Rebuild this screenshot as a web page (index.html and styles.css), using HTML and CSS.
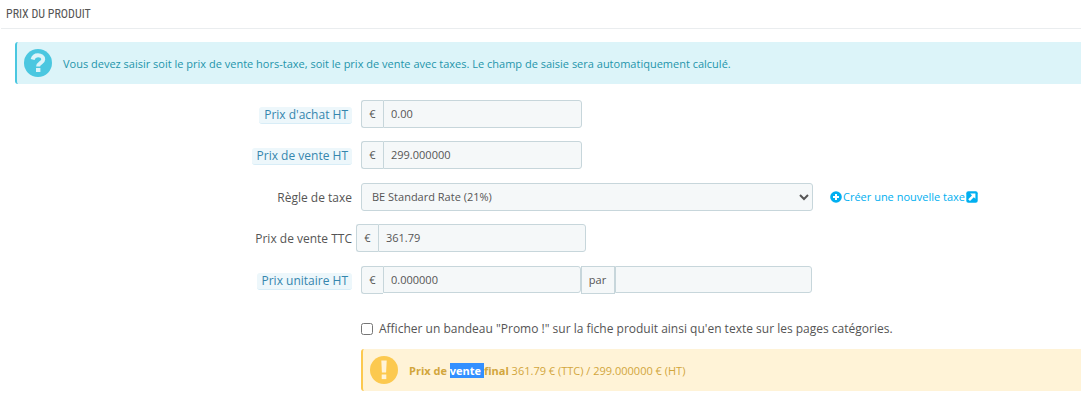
FILE: index.html
```
<!DOCTYPE html>
<html lang="fr">

<head>
    <meta charset="utf-8">
    <title>Prix du produit</title>
    <link rel="stylesheet" href="styles.css">
</head>

<body>
    <div class="panel">
        <h3 class="panel-heading">PRIX DU PRODUIT</h3>

        <div class="panel-body">
            <div class="alert alert-info">
                <svg class="alert-icon" viewBox="0 0 28 28" aria-hidden="true">
                    <circle cx="14" cy="14" r="14" fill="#4ac7e0" />
                    <path d="M8.6 10.4C9.4 7.4 11.3 6.3 14 6.3c3 0 5.2 1.6 5.2 4.1 0 3.6-5.1 3.5-5.1 7.2" fill="none" stroke="#dcf4f9" stroke-width="4" />
                    <rect x="12" y="19" width="4.4" height="4" fill="#dcf4f9" />
                </svg>
                <p>Vous devez saisir soit le prix de vente hors-taxe, soit le prix de vente avec taxes. Le champ de saisie sera automatiquement calculé.</p>
            </div>

            <div class="form-group">
                <label for="wholesalePrice"><span class="label-tooltip">Prix d'achat HT</span></label>
                <div class="input-group">
                    <span class="addon">€</span>
                    <input type="text" id="wholesalePrice" value="0.00">
                </div>
            </div>

            <div class="form-group">
                <label for="priceHT"><span class="label-tooltip">Prix de vente HT</span></label>
                <div class="input-group">
                    <span class="addon">€</span>
                    <input type="text" id="priceHT" value="299.000000">
                </div>
            </div>

            <div class="form-group form-group-tall">
                <label for="taxRule">Règle de taxe</label>
                <div class="tax-rule">
                    <select id="taxRule">
                        <option selected>BE Standard Rate (21%)</option>
                    </select>
                    <a href="#" class="btn-link">
                        <svg class="link-icon" viewBox="0 0 12 12" aria-hidden="true">
                            <circle cx="6" cy="6" r="5.8" fill="#00aff0" />
                            <path d="M6 3v6M3 6h6" stroke="#fff" stroke-width="2" />
                        </svg>
                        <span>Créer une nouvelle taxe</span>
                        <svg class="link-icon" viewBox="0 0 12 12" aria-hidden="true">
                            <rect x="0.3" y="0.3" width="11.4" height="11.4" rx="2" fill="#00aff0" />
                            <path d="M4.2 2.6h5.2v5.2L7.8 6.2 4 10 2.2 8.2 6 4.4z" fill="#fff" />
                        </svg>
                    </a>
                </div>
            </div>

            <div class="form-group form-group-close">
                <label for="priceTTC">Prix de vente TTC</label>
                <div class="input-group input-group-wide">
                    <span class="addon">€</span>
                    <input type="text" id="priceTTC" value="361.79">
                </div>
            </div>

            <div class="form-group form-group-tall">
                <label for="unitPrice"><span class="label-tooltip">Prix unitaire HT</span></label>
                <div class="input-group input-group-unit">
                    <span class="addon">€</span>
                    <input type="text" id="unitPrice" value="0.000000">
                    <label class="addon addon-middle" for="unity">par</label>
                    <input type="text" id="unity">
                </div>
            </div>

            <div class="form-group form-group-check">
                <div class="checkbox">
                    <input type="checkbox" id="onSale">
                    <label for="onSale">Afficher un bandeau "Promo !" sur la fiche produit ainsi qu'en texte sur les pages catégories.</label>
                </div>
            </div>

            <div class="form-group">
                <div class="alert alert-warning">
                    <svg class="alert-icon" viewBox="0 0 28 28" aria-hidden="true">
                        <circle cx="14" cy="14" r="14" fill="#fcc94f" />
                        <path d="M11.3 4.5h5.4l-.6 12h-4.2z" fill="#fff3d7" />
                        <rect x="11.7" y="18.5" width="4.6" height="4.6" fill="#fff3d7" />
                    </svg>
                    <p><strong>Prix de <span class="selected">vente </span>final</strong> 361.79 € (TTC) / 299.000000 € (HT)</p>
                </div>
            </div>
        </div>
    </div>
</body>

</html>
```

FILE: styles.css
```
* {
    box-sizing: border-box;
}

body {
    font-family: "Open Sans", sans-serif;
    font-size: 12px;
    line-height: 18px;
    color: #555;
    background: #fff;
    margin: 0;
}

p {
    margin: 0;
}

.panel-heading {
    font-family: "Ubuntu Condensed", "Roboto Condensed", Roboto, sans-serif;
    font-size: 12px;
    font-weight: normal;
    line-height: 28px;
    margin: 0 0 0 1px;
    padding-left: 5px;
    border-bottom: 1px solid #eaedef;
}

.panel-body {
    padding: 13px 0 20px 15px;
}

.alert {
    display: flex;
    align-items: center;
    gap: 11px;
    height: 42px;
    padding-left: 7px;
    border-radius: 3px 0 0 3px;
    font-size: 11px;
}

.alert p {
    padding-top: 2px;
}

.alert-icon {
    flex: none;
    width: 28px;
    height: 28px;
}

.alert-info {
    margin-bottom: 16px;
    background: #dcf4f9;
    border-left: 2px solid #4ac7e0;
    color: #1e94ab;
}

.alert-warning {
    grid-column: 2;
    background: #fff3d7;
    border-left: 2px solid #fcc94f;
    color: #d2a63c;
}

.form-group {
    display: grid;
    grid-template-columns: 337px 1fr;
    column-gap: 9px;
    align-items: end;
    min-height: 28px;
    margin-bottom: 13px;
}

.form-group-tall {
    min-height: 29px;
}

.form-group-close {
    column-gap: 4px;
}

.form-group > label {
    height: 28px;
    text-align: right;
    line-height: 30px;
}

.label-tooltip {
    display: inline-block;
    line-height: 16px;
    padding: 0 4px 0 5px;
    color: #3586ae;
    background: #edf7fb;
    border-bottom: 1px solid #d8edf7;
    border-radius: 3px;
}

.input-group {
    display: flex;
    max-width: 221px;
}

.input-group-wide {
    max-width: 230px;
}

.input-group-unit {
    max-width: 451px;
}

.addon {
    flex: none;
    width: 22px;
    height: 28px;
    line-height: 26px;
    text-align: center;
    font-size: 11px;
    background: #f5f8f9;
    border: 1px solid #c7d6db;
    border-right: none;
    border-radius: 3px 0 0 3px;
}

.addon-middle {
    width: 34px;
    border-right: 1px solid #c7d6db;
    border-radius: 0;
}

input[type="text"],
select {
    font-family: inherit;
    font-size: 11px;
    color: #555;
    background: #f5f8f9;
    border: 1px solid #c7d6db;
}

input[type="text"] {
    flex: 1;
    min-width: 0;
    height: 28px;
    padding: 0 7px 1px;
    border-radius: 0 3px 3px 0;
}

.input-group-unit input[type="text"] {
    height: 27px;
}

.tax-rule {
    display: flex;
    align-items: center;
    gap: 17px;
}

select {
    width: 452px;
    height: 28px;
    padding: 0 6px 1px;
    border-radius: 3px;
}

.btn-link {
    display: flex;
    align-items: center;
    gap: 1px;
    font-size: 11px;
    color: #00aff0;
    text-decoration: none;
}

.link-icon {
    width: 12px;
    height: 12px;
}

.form-group-check {
    min-height: 19px;
    margin: 25px 0 11px;
}

.checkbox {
    grid-column: 2;
    display: flex;
    align-items: center;
    gap: 6px;
    height: 19px;
}

.checkbox input {
    width: 12px;
    height: 12px;
    margin: 0;
}

.selected {
    color: #fff;
    background: #3390ff;
}
```
